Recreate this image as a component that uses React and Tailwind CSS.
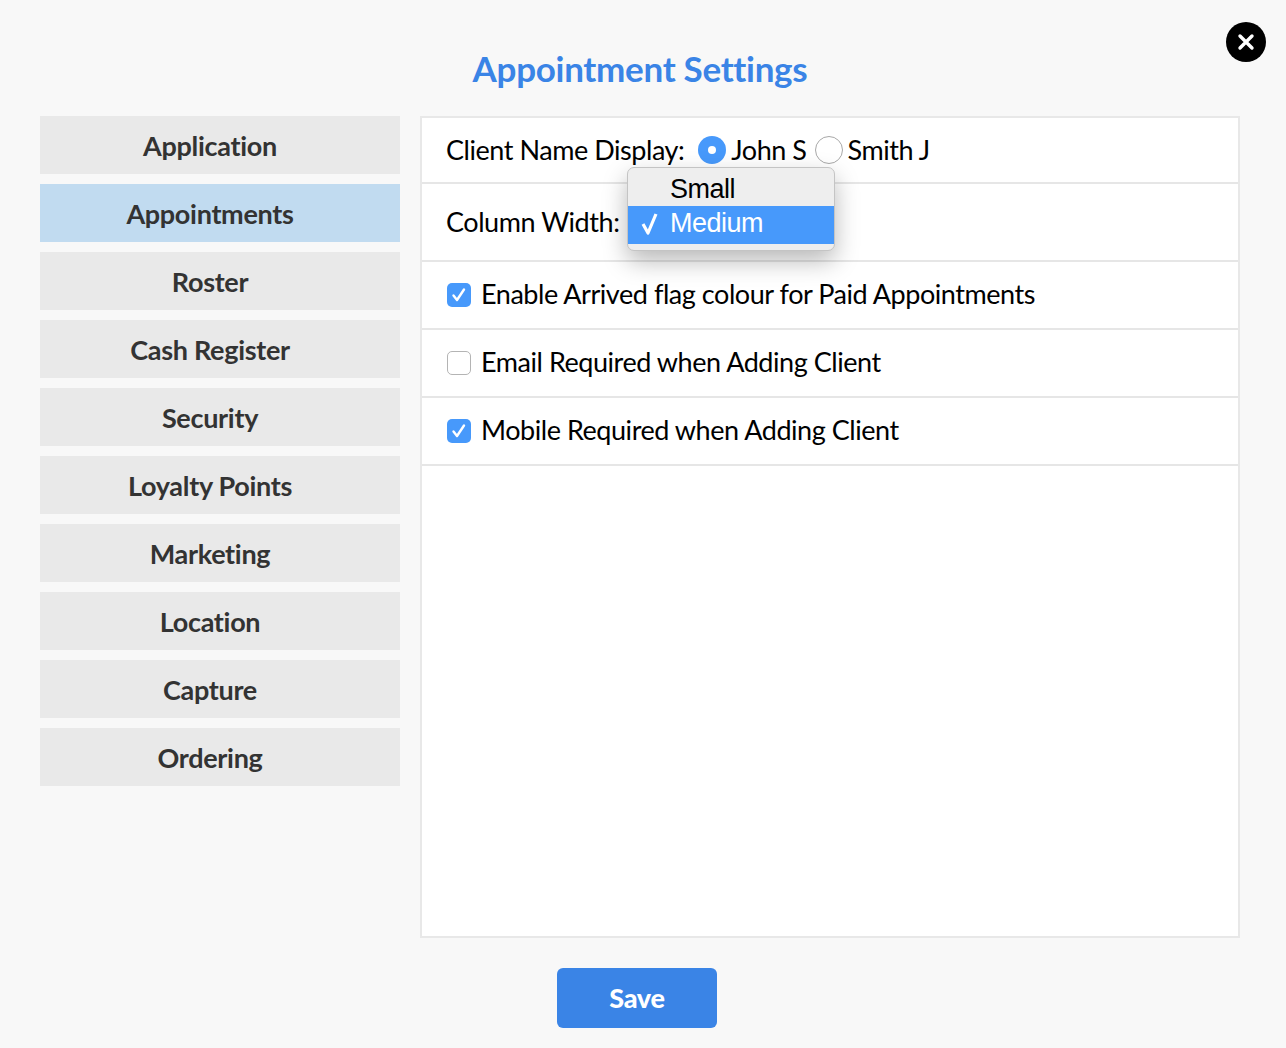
const lato = "font-['Lato',sans-serif]";
const menu = ["Application","Appointments","Roster","Cash Register","Security","Loyalty Points","Marketing","Location","Capture","Ordering"];

function Radio({ on, className }) {
  return on ? (
    <span className={`flex h-[28px] w-[28px] shrink-0 items-center justify-center rounded-full bg-[#4799fb] ${className}`}>
      <span className="h-[8px] w-[8px] rounded-full bg-white" />
    </span>
  ) : (
    <span className={`h-[28px] w-[28px] shrink-0 rounded-full border border-[#a8a8a8] bg-white ${className}`} />
  );
}

function Check({ on }) {
  return on ? (
    <span className="flex h-[24px] w-[24px] shrink-0 items-center justify-center rounded-[5px] bg-[#4799fb]">
      <svg width="16" height="16" viewBox="0 0 16 16" fill="none" stroke="white" strokeWidth="2.4" strokeLinecap="round" strokeLinejoin="round">
        <path d="M2.5 8.5 L6 13 L13 2.5" />
      </svg>
    </span>
  ) : (
    <span className="h-[24px] w-[24px] shrink-0 rounded-[5px] border border-[#b4b4b4] bg-white" />
  );
}

function CheckRow({ on, label }) {
  return (
    <div className="flex h-[68px] items-center gap-[10px] border-b-2 border-[#e6e6e6] pl-[25px]">
      <Check on={on} />
      <span className="pb-[2px]">{label}</span>
    </div>
  );
}

export default function App() {
  return (
    <div className={`relative h-[1048px] w-[1286px] overflow-hidden bg-[#f8f8f8] ${lato}`}>
      <button className="absolute left-[1226px] top-[22px] flex h-[40px] w-[40px] items-center justify-center rounded-full bg-black">
        <svg width="18" height="18" viewBox="0 0 18 18" fill="none" stroke="white" strokeWidth="3.4" strokeLinecap="round">
          <path d="M3 3 L15 15 M15 3 L3 15" />
        </svg>
      </button>

      <h1 className="flex h-[116px] items-start justify-center pr-[6px] pt-[45px] text-[35px] font-bold leading-[46px] tracking-[-0.3px] text-[#3a84e6]">
        Appointment Settings
      </h1>

      <div className="flex gap-[20px] pl-[40px]">
        <nav className="flex w-[360px] flex-col gap-[10px]">
          {menu.map((m) => (
            <div
              key={m}
              className={`flex h-[58px] items-center justify-center pr-[20px] pt-[2px] text-[27px] font-bold tracking-[-0.3px] text-[#333333] ${m === "Appointments" ? "bg-[#c1dbf0]" : "bg-[#e9e9e9]"}`}
            >
              {m}
            </div>
          ))}
        </nav>

        <main className="relative h-[822px] w-[820px] border-2 border-[#e8e8e8] bg-white text-[27px] tracking-[-0.45px] text-black">
          <div className="flex h-[66px] items-center border-b-2 border-[#e6e6e6] pl-[24px]">
            <span>Client Name Display:</span>
            <Radio on className="ml-[14px]" />
            <span className="ml-[5px]">John S</span>
            <Radio className="ml-[8px]" />
            <span className="ml-[5px]">Smith J</span>
          </div>
          <div className="flex h-[78px] items-center border-b-2 border-[#e6e6e6] pl-[24px]">
            <span>Column Width:</span>
          </div>
          <CheckRow on label="Enable Arrived flag colour for Paid Appointments" />
          <CheckRow label="Email Required when Adding Client" />
          <CheckRow on label="Mobile Required when Adding Client" />

          <div className="absolute left-[205px] top-[49px] z-10 flex h-[84px] w-[208px] flex-col rounded-[7px] border border-[#c4c4c4] bg-[#eeeeee] pt-[3px] font-['Liberation_Sans',sans-serif] text-[27px] tracking-[-0.5px] shadow-[0_10px_24px_rgba(0,0,0,0.28)]">
            <div className="flex h-[35px] items-center pl-[42px] pt-[1px] text-black">Small</div>
            <div className="relative flex h-[38px] items-center bg-[#4799fb] pb-[4px] pl-[42px] text-white">
              <svg className="absolute left-[12px] top-[7px]" width="20" height="24" viewBox="0 0 20 24" fill="none" stroke="white" strokeWidth="3.2" strokeLinejoin="round">
                <path d="M3 11 L8 20 L16 1" />
              </svg>
              Medium
            </div>
          </div>
        </main>
      </div>

      <div className="flex justify-start pl-[557px] pt-[30px]">
        <button className="flex h-[60px] w-[160px] items-center justify-center rounded-[6px] bg-[#3a84e6] text-[27px] font-black tracking-[-0.3px] text-white">
          Save
        </button>
      </div>
    </div>
  );
}
